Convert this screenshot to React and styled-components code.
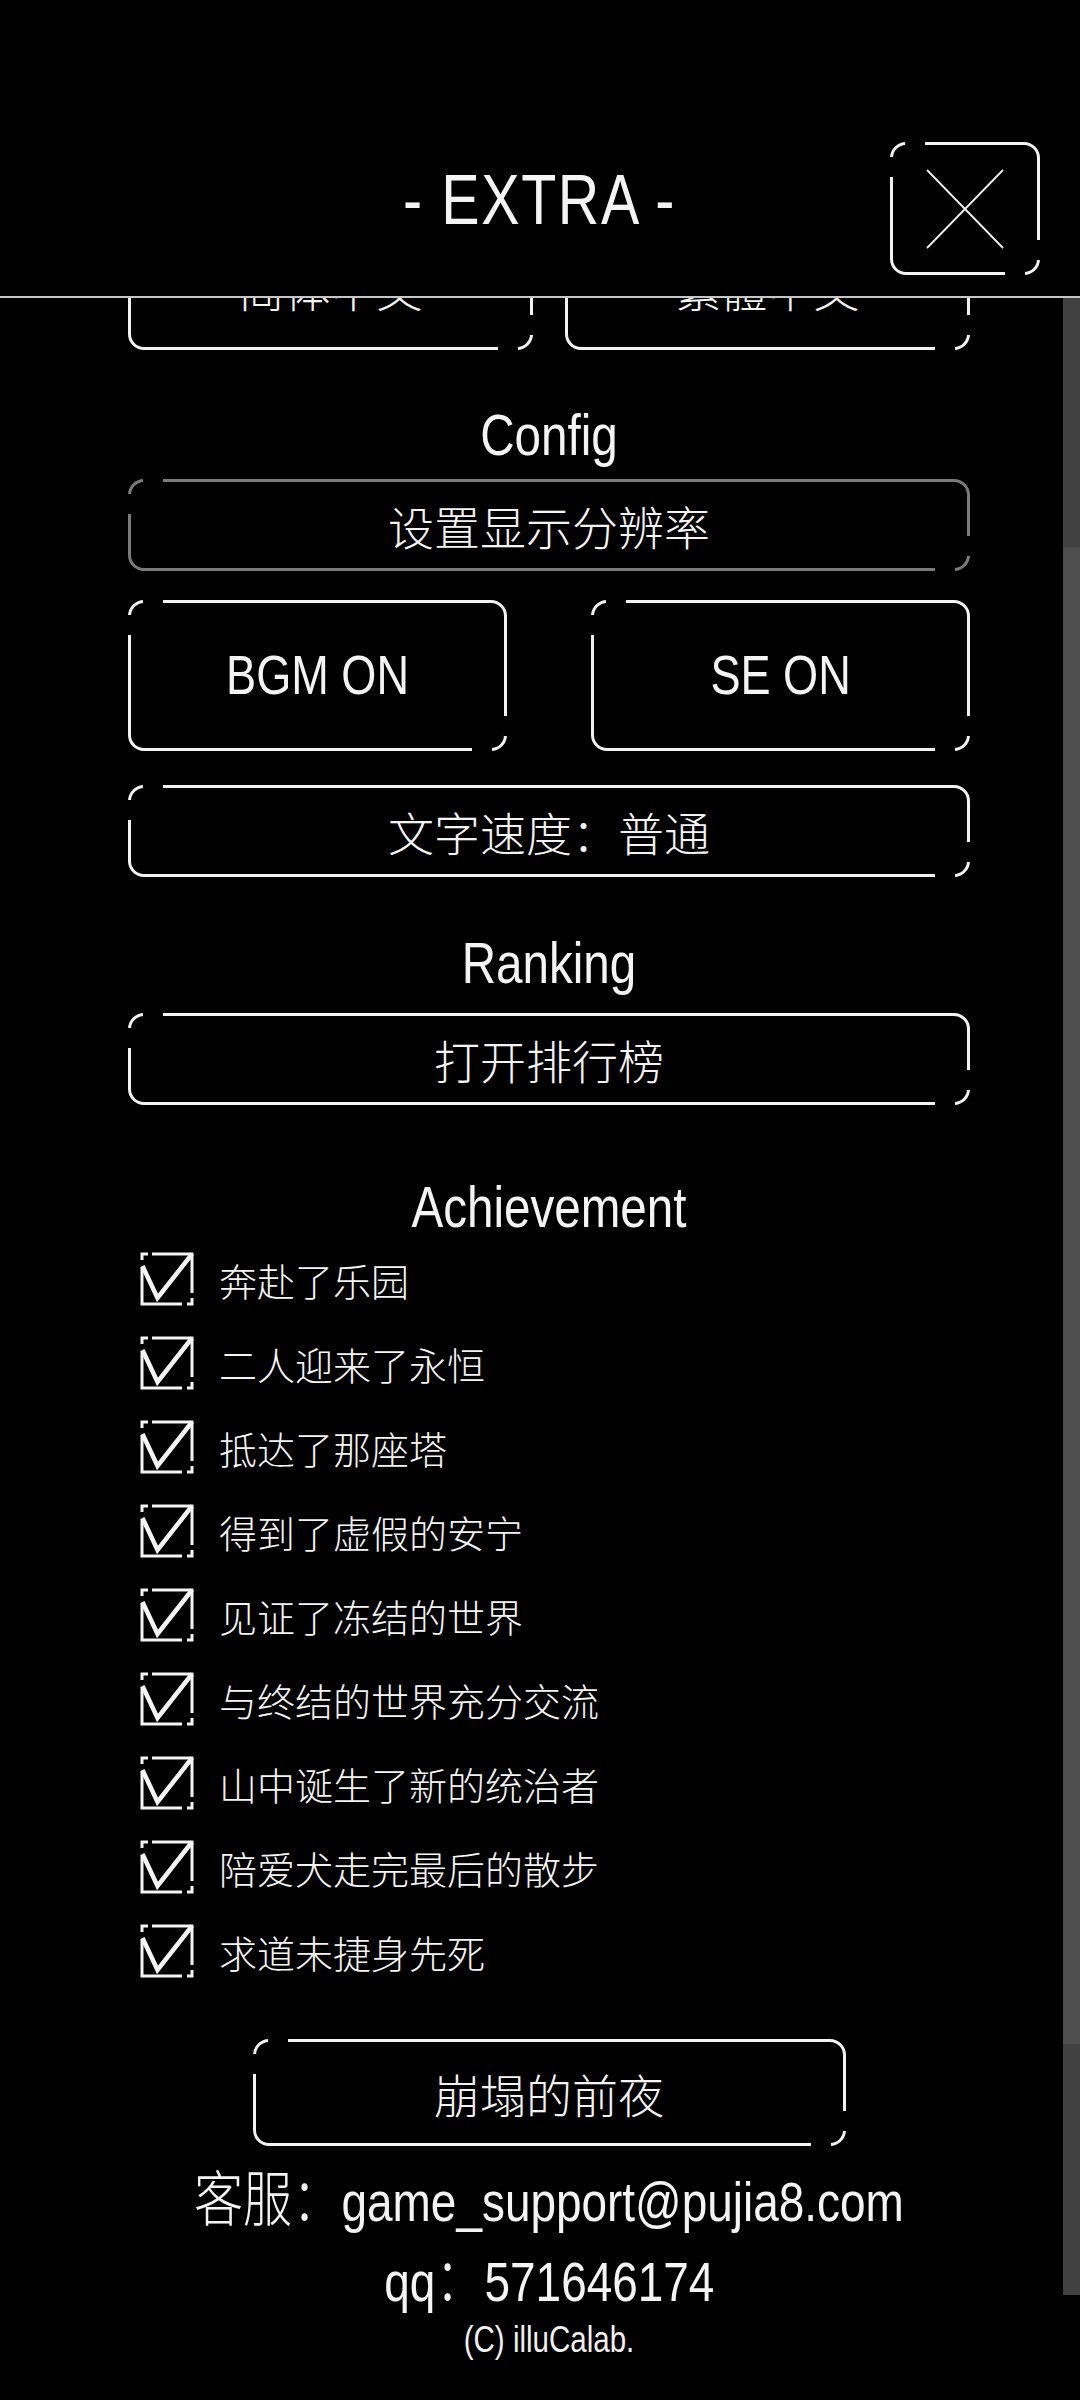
import React, { useLayoutEffect, useRef } from 'react';
import styled, { createGlobalStyle, css } from 'styled-components';

const LATIN = `"Liberation Sans", Arial, "Noto Sans CJK SC", sans-serif`;
const CJK = `"Noto Sans CJK SC", "Noto Sans CJK JP", sans-serif`;

const Global = createGlobalStyle`
  html, body { margin: 0; padding: 0; background: #000; }
  body { width: 1080px; height: 2400px; overflow: hidden; }
  #root { width: 1080px; height: 2400px; }
`;

const Screen = styled.div`
  width: 1080px;
  height: 2400px;
  background: #000;
  color: #f4f4f4;
  display: flex;
  flex-direction: column;
  overflow: hidden;
`;

const frame = css`
  position: relative;
  box-sizing: border-box;
  border: 3px solid ${(p) => (p.$dim ? '#7a7a7a' : '#f2f2f2')};
  border-radius: 16px;
  background: #000;
  &::before,
  &::after {
    content: '';
    position: absolute;
    width: 36px;
    height: 36px;
    pointer-events: none;
    background:
      linear-gradient(#000, #000) 15px 0 / 20px 3px no-repeat,
      linear-gradient(#000, #000) 0 15px / 3px 20px no-repeat;
  }
  &::before { top: -3px; left: -3px; }
  &::after { bottom: -3px; right: -3px; transform: rotate(180deg); }
`;

/* condensed rendering of the Latin face */
const narrow = css`
  font-family: ${LATIN};
  font-weight: 400;
  transform: scaleX(0.82);
  transform-origin: center;
`;

const Header = styled.header`
  flex: none;
  box-sizing: border-box;
  height: 298px;
  padding-top: 142px;
  display: grid;
  grid-template-columns: 1fr auto 1fr;
  align-items: start;
  border-bottom: 2px solid #c6c6c6;
`;

const Title = styled.h1`
  ${narrow}
  grid-column: 2;
  margin: 0;
  font-size: 70px;
  line-height: 116px;
  letter-spacing: 2px;
  color: #f4f4f4;
  white-space: pre;
`;

const CloseButton = styled.button`
  ${frame}
  grid-column: 3;
  justify-self: end;
  margin: 0 40px 0 0;
  width: 150px;
  height: 133px;
  padding: 0;
  display: flex;
  align-items: center;
  justify-content: center;
  cursor: pointer;
`;

const ScrollFrame = styled.div`
  flex: 1;
  position: relative;
  min-height: 0;
`;

const Scroller = styled.div`
  height: 100%;
  overflow-y: scroll;
  overflow-x: hidden;
  scrollbar-width: none;
  &::-webkit-scrollbar { display: none; }
`;

const ScrollTrack = styled.div`
  position: absolute;
  top: 0;
  right: 0;
  width: 17px;
  height: 1997px;
  background: #414141;
  display: flex;
  flex-direction: column;
`;

const ScrollThumb = styled.div`
  margin-top: 249px;
  height: 1497px;
  background: #4e4e4e;
`;

const Column = styled.div`
  width: 842px;
  margin-left: 128px;
  box-sizing: border-box;
  padding: 258px 0 300px;
  display: flex;
  flex-direction: column;
`;

const SectionTitle = styled.h2`
  ${narrow}
  margin: ${(p) => p.$mt}px 0 ${(p) => p.$mb || 0}px;
  font-size: 58px;
  line-height: 48px;
  height: 48px;
  text-align: center;
  color: #f4f4f4;
`;

const Pair = styled.div`
  margin-top: ${(p) => p.$mt}px;
  display: grid;
  grid-template-columns: 1fr 1fr;
  column-gap: ${(p) => p.$gap}px;
`;

const FrameButton = styled.button`
  ${frame}
  margin: ${(p) => p.$mt || 0}px 0 0;
  width: ${(p) => (p.$w ? `${p.$w}px` : '100%')};
  align-self: center;
  height: ${(p) => p.$h}px;
  padding: 0;
  display: flex;
  align-items: center;
  justify-content: center;
  color: #f4f4f4;
  font-family: ${CJK};
  font-size: 46px;
  font-weight: 300;
  line-height: 1;
  cursor: pointer;
  appearance: none;
`;

const NarrowLabel = styled.span`
  ${narrow}
  display: inline-block;
  font-size: 55px;
`;

const List = styled.ul`
  list-style: none;
  margin: 0;
  padding: 0;
  display: flex;
  flex-direction: column;
`;

const Row = styled.li`
  height: 84px;
  display: flex;
  align-items: center;
  gap: 25px;
  padding-left: 12px;
  font-family: ${CJK};
  font-weight: 300;
  font-size: 38px;
  color: #f4f4f4;
`;

const Contact = styled.p`
  ${narrow}
  align-self: center;
  width: max-content;
  margin: ${(p) => p.$mt || 0}px 0 0;
  height: 80px;
  line-height: 80px;
  text-align: center;
  font-size: 56px;
  color: #f4f4f4;
  white-space: nowrap;
`;

const Cjk = styled.span`
  font-family: ${CJK};
  font-weight: 300;
  font-size: 60px;
`;

const Copyright = styled.p`
  ${narrow}
  margin: 7px 0 0;
  text-align: center;
  font-size: 36px;
  line-height: 36px;
  color: #f0f0f0;
`;

const CheckIcon = () => (
  <svg width="54" height="54" viewBox="0 0 54 54" fill="none" stroke="#f4f4f4" strokeLinecap="butt">
    <path d="M2 8 V2 H8" strokeWidth="3" />
    <path d="M12 2 H52 V41" strokeWidth="3" />
    <path d="M2 15 V52 H42" strokeWidth="3" />
    <path d="M47 52 H52 V46" strokeWidth="3" />
    <path d="M2.5 14 L17.5 46 L52 2" strokeWidth="4.5" strokeLinejoin="miter" />
  </svg>
);

const CloseIcon = () => (
  <svg width="78" height="80" viewBox="0 0 78 80" fill="none" stroke="#f0f0f0" strokeWidth="1.8">
    <path d="M1 1 L77 79" />
    <path d="M77 1 L1 79" />
  </svg>
);

const achievements = [
  '奔赴了乐园',
  '二人迎来了永恒',
  '抵达了那座塔',
  '得到了虚假的安宁',
  '见证了冻结的世界',
  '与终结的世界充分交流',
  '山中诞生了新的统治者',
  '陪爱犬走完最后的散步',
  '求道未捷身先死',
];

export default function App() {
  const scrollRef = useRef(null);
  useLayoutEffect(() => {
    if (scrollRef.current) scrollRef.current.scrollTop = 332;
  }, []);

  return (
    <Screen>
      <Global />
      <Header>
        <Title>- EXTRA -</Title>
        <CloseButton aria-label="close">
          <CloseIcon />
        </CloseButton>
      </Header>

      <ScrollFrame>
        <Scroller ref={scrollRef}>
          <Column>
            <Pair $mt={0} $gap={32}>
              <FrameButton $h={126}>简体中文</FrameButton>
              <FrameButton $h={126}>繁體中文</FrameButton>
            </Pair>

            <SectionTitle $mt={61}>Config</SectionTitle>
            <FrameButton $mt={20} $h={92} $dim>设置显示分辨率</FrameButton>
            <Pair $mt={29} $gap={84}>
              <FrameButton $h={151}><NarrowLabel>BGM ON</NarrowLabel></FrameButton>
              <FrameButton $h={151}><NarrowLabel>SE ON</NarrowLabel></FrameButton>
            </Pair>
            <FrameButton $mt={34} $h={92}>文字速度：普通</FrameButton>

            <SectionTitle $mt={62}>Ranking</SectionTitle>
            <FrameButton $mt={26} $h={92}>打开排行榜</FrameButton>

            <SectionTitle $mt={78} $mb={6}>Achievement</SectionTitle>
            <List>
              {achievements.map((a) => (
                <Row key={a}>
                  <CheckIcon />
                  <span>{a}</span>
                </Row>
              ))}
            </List>

            <FrameButton $mt={46} $h={107} $w={593}>崩塌的前夜</FrameButton>
            <Contact $mt={9}>
              <Cjk>客服：</Cjk>game_support@pujia8.com
            </Contact>
            <Contact>
              qq<Cjk>：</Cjk>571646174
            </Contact>
            <Copyright>(C) illuCalab.</Copyright>
          </Column>
        </Scroller>
        <ScrollTrack aria-hidden="true">
          <ScrollThumb />
        </ScrollTrack>
      </ScrollFrame>
    </Screen>
  );
}
